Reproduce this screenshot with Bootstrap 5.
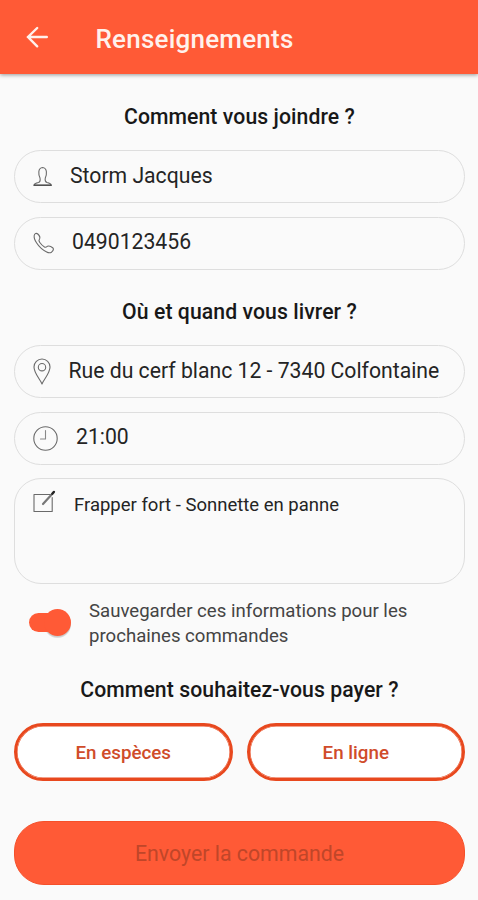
<!DOCTYPE html>
<html lang="fr">
<head>
<meta charset="utf-8">
<meta name="viewport" content="width=device-width, initial-scale=1">
<title>Renseignements</title>
<link rel="stylesheet" href="https://cdn.jsdelivr.net/npm/bootstrap@5.3.0/dist/css/bootstrap.min.css">
<style>
  body { font-family: Roboto, sans-serif; background: #fafafa; color: #242424; line-height: 1.2; }
  .app-bar { height: 74px; background: #ff5a36; box-shadow: 0 1px 4px rgba(0,0,0,.4); padding-left: 25px; }
  .app-title { font-size: 26px; letter-spacing: .22px; font-weight: 500; color: #fff1ec; margin: 5px 0 0 46.5px; }
  .screen { padding: 30px 13px 0 14px; }
  .section-title { font-size: 21.2px; letter-spacing: .08px; font-weight: 500; color: #181818; text-align: center; margin: 0; line-height: 26px; }
  .fields { gap: 14px; padding-top: 20px; }
  .title-gap { margin-top: 29px; }
  .field { height: 53px; border: 1px solid #dedede; border-radius: 27px; font-size: 21.2px; padding-left: 17px; }
  .field svg, .note svg { fill: none; stroke: #6a6a6a; stroke-width: 1.1; flex: none; stroke-linecap: round; stroke-linejoin: round; }
  .field span { line-height: 26px; margin-bottom: 2px; white-space: nowrap; }
  .name-text { margin-left: 12px; }
  .field .phone-text { margin: 0 0 4px 14px; }
  .address-text { margin-left: 10.500px; }
  .field .time-text { margin: 0 0 4px 18px; }
  .note { height: 106px; margin-top: -1px; border: 1px solid #dedede; border-radius: 27px; font-size: 18.5px; padding: 11px 0 0 17px; }
  .note span { line-height: 24px; margin: 3px 0 0 16px; }
  .save-row { padding: 15px 0 0 12px; }
  .save-text { font-size: 18.6px; line-height: 24.5px; color: #444; margin-left: 15px; white-space: nowrap; }
  .toggle { margin-top: 8px; flex: none; }
  .pay-row { gap: 14px; padding-top: 20px; }
  .btn-pay, .btn-pay:hover { height: 58px; padding: 2px 0 0; border: 3px solid #e8481e; box-shadow: inset 0 0 0 .5px #e8481e; border-radius: 29px; background: #fff; color: #d04c2a; font-size: 18.8px; font-weight: 500; flex: 1 1 0; }
  .btn-send, .btn-send:disabled { height: 64px; padding: 2px 0 0; border-radius: 30px; background: #ff5a36; color: #c04629; font-size: 21.3px; border: 1px solid #f5502a; opacity: 1; margin-top: 40px; }
</style>
</head>
<body>
<header class="app-bar d-flex align-items-center">
  <svg width="24" height="24" viewBox="0 0 24 24" fill="none" stroke="#fff1ec" stroke-width="2.4" stroke-linecap="round"><path d="M21.800 12H3M12.200 3 3 12l9.200 9.300"/></svg>
  <h1 class="app-title">Renseignements</h1>
</header>
<main class="screen">
  <h2 class="section-title">Comment vous joindre ?</h2>
  <div class="fields d-flex flex-column">
    <div class="field d-flex align-items-center">
      <svg width="26" height="26" viewBox="0 0 26 26"><path d="M8 14C6.500 11 5.500 4 10.600 3.500C15.600 4 14.800 11 13.300 14C12.800 16.500 13 17.800 15 18.500C17.500 19 19 19.500 19.300 21H2C2.300 19.500 4 19 6.400 18.500C8.500 17.800 8.500 16.500 8 14Z"/><path d="M2 21.200h17.300" stroke="#333"/></svg>
      <span class="name-text">Storm Jacques</span>
    </div>
    <div class="field d-flex align-items-center">
      <svg width="26" height="26" viewBox="0 0 26 26"><path d="M2.200 4.500C2.500 2.300 4.500 1.800 5.800 3C7.300 4.500 8.500 6.500 7.500 8C6.500 9.300 6.700 10 7.600 11.200C9 13.200 10.600 14.800 12.500 16C13.700 16.700 14.400 16.100 15.500 15.300C17.300 14.500 19.500 15.800 21 17C21.800 18 20.800 20 19.500 21.200C18.200 22 16.200 21.800 14.700 21C10.500 19 7 15.700 4.500 11.800C3 9.500 1.800 7 2.200 4.500Z"/></svg>
      <span class="phone-text">0490123456</span>
    </div>
  </div>
  <h2 class="section-title title-gap">Où et quand vous livrer ?</h2>
  <div class="fields d-flex flex-column">
    <div class="field d-flex align-items-center">
      <svg width="26" height="28" viewBox="0 0 26 28"><path d="M10 26C8.500 21.500 2 15.500 2 9A8 8 0 0 1 18 9C18 15.500 11.500 21.500 10 26Z"/><circle cx="10" cy="9.200" r="3.700"/></svg>
      <span class="address-text">Rue du cerf blanc 12 - 7340 Colfontaine</span>
    </div>
    <div class="field d-flex align-items-center">
      <svg width="26" height="26" viewBox="0 0 26 26"><circle cx="13.500" cy="12.500" r="11.700"/><path d="M13.500 4.500V13H8.500" stroke="#888"/></svg>
      <span class="time-text">21:00</span>
    </div>
    <div class="note d-flex align-items-start">
      <svg width="26" height="26" viewBox="0 0 26 26"><path d="M18.500 4.500H2v17h18.200V7.500"/><path d="M11 14 21.500 2.500" stroke="#777" stroke-width="2.200"/><path d="m20.300 3.800 1.700-2" stroke="#222" stroke-width="2.200"/></svg>
      <span>Frapper fort - Sonnette en panne</span>
    </div>
  </div>
  <div class="save-row d-flex align-items-start">
    <svg class="toggle" width="48" height="34" viewBox="0 0 48 34" role="switch" aria-checked="true"><circle cx="31.500" cy="17.500" r="13.500" fill="#000" opacity=".12"/><circle cx="31.500" cy="16.500" r="13.500" fill="#000" opacity=".08"/><rect x="3" y="6" width="32" height="19" rx="9.500" fill="#ff5a36"/><circle cx="31.500" cy="15.500" r="13.500" fill="#ff5a36"/></svg>
    <div class="save-text">Sauvegarder ces informations pour les<br>prochaines commandes</div>
  </div>
  <h2 class="section-title title-gap">Comment souhaitez-vous payer ?</h2>
  <div class="pay-row d-flex">
    <button class="btn btn-pay">En espèces</button>
    <button class="btn btn-pay">En ligne</button>
  </div>
  <button class="btn btn-send w-100" disabled>Envoyer la commande</button>
</main>
<script src="https://cdn.jsdelivr.net/npm/bootstrap@5.3.0/dist/js/bootstrap.bundle.min.js"></script>
</body>
</html>
